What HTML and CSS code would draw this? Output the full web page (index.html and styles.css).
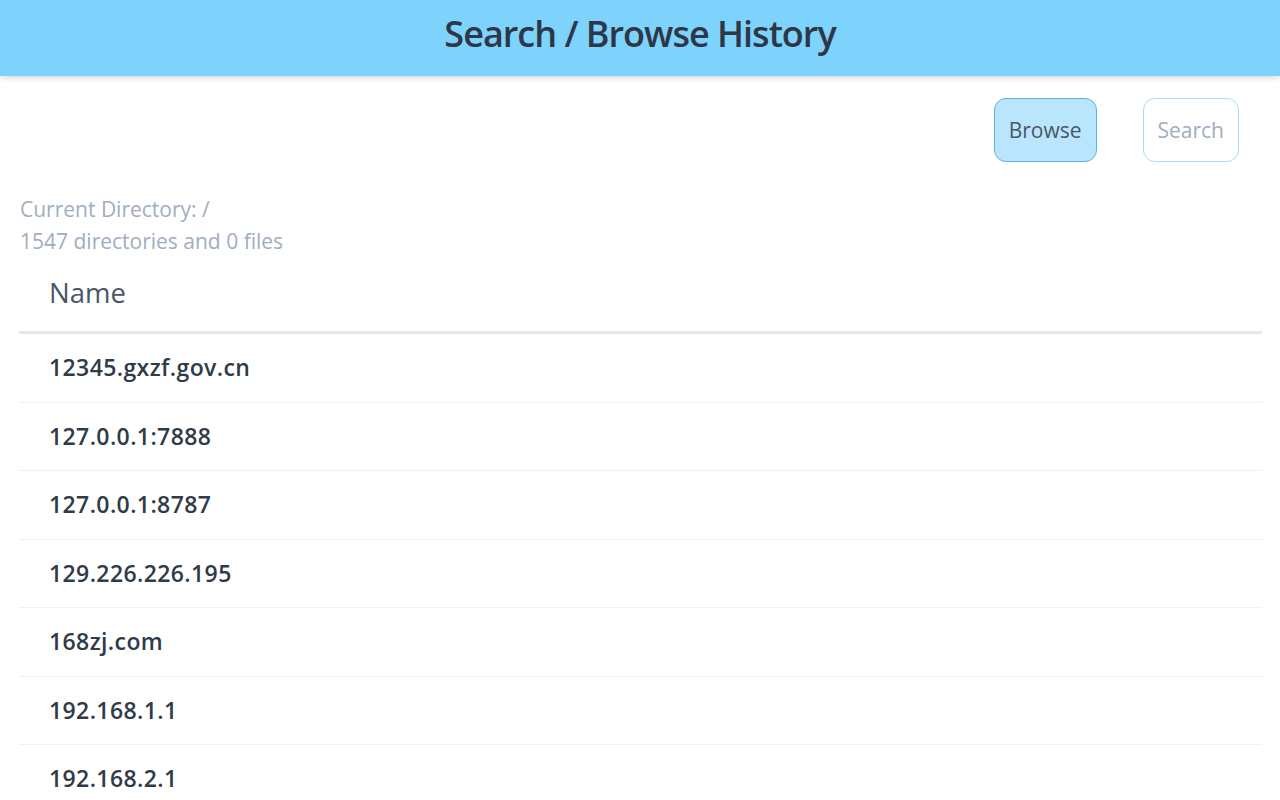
FILE: index.html
```html
<!DOCTYPE html>
<html lang="en">
<head>
<meta charset="utf-8">
<title>Search / Browse History</title>
<link rel="stylesheet" href="styles.css">
</head>
<body>
<header class="topbar">
  <h1 class="title">Search / Browse History</h1>
</header>
<main class="content">
  <div class="actions">
    <button class="btn btn-active">Browse</button>
    <button class="btn">Search</button>
  </div>
  <div class="meta">
    <div>Current Directory: /</div>
    <div>1547 directories and 0 files</div>
  </div>
  <div class="listing-wrap">
  <table class="listing">
    <thead>
      <tr><th>Name</th></tr>
    </thead>
    <tbody>
      <tr><td>12345.gxzf.gov.cn</td></tr>
      <tr><td>127.0.0.1:7888</td></tr>
      <tr><td>127.0.0.1:8787</td></tr>
      <tr><td>129.226.226.195</td></tr>
      <tr><td>168zj.com</td></tr>
      <tr><td>192.168.1.1</td></tr>
      <tr><td>192.168.2.1</td></tr>
    </tbody>
  </table>
  </div>
</main>
</body>
</html>
```
FILE: styles.css
```css
* { box-sizing: border-box; }
html, body { margin: 0; padding: 0; background: #fff; }
body {
  font-family: "Open Sans", "Noto Sans", sans-serif;
  color: #2d3748;
  overflow: hidden;
  height: 800px;
}
.topbar {
  height: 76px;
  background: #7dd3fc;
  display: flex;
  align-items: center;
  justify-content: center;
  padding-bottom: 9px;
  box-shadow: 0 2px 6px rgba(0,0,0,0.15);
  position: relative;
  z-index: 1;
}
.title {
  margin: 0;
  font-size: 36px;
  line-height: 44px;
  font-weight: 600;
  color: #2d3748;
  letter-spacing: -1px;
}
.content {
  padding: 22px 18px 0 19px;
}
.actions {
  display: flex;
  justify-content: flex-end;
  gap: 46px;
  padding-right: 23px;
}
.btn {
  height: 64px;
  padding: 0 14px;
  font-family: inherit;
  font-size: 21px;
  border-radius: 12px;
  border: 1px solid #a8dcf0;
  background: #fff;
  color: #a0aec0;
}
.btn-active {
  background: #bae6fd;
  border-color: #5cb3da;
  color: #4a5568;
}
.meta {
  margin-top: 31px;
  padding-left: 1px;
  font-size: 21px;
  line-height: 32px;
  color: #a0aec0;
}
.listing-wrap {
  height: 560px;
  overflow: hidden;
}
.listing {
  width: 100%;
  margin-top: 4px;
  border-collapse: collapse;
}
.listing th {
  text-align: left;
  font-weight: 400;
  font-size: 27.5px;
  color: #4a5568;
  padding: 15px 30px 21px;
  line-height: 34px;
  border-bottom: 3px solid #e2e8f0;
}
.listing td {
  font-size: 23px;
  font-weight: 600;
  letter-spacing: 0.4px;
  line-height: 27.5px;
  padding: 20px 30px 20px;
  border-bottom: 1px solid #edf2f7;
  color: #2f3b48;
}
```
